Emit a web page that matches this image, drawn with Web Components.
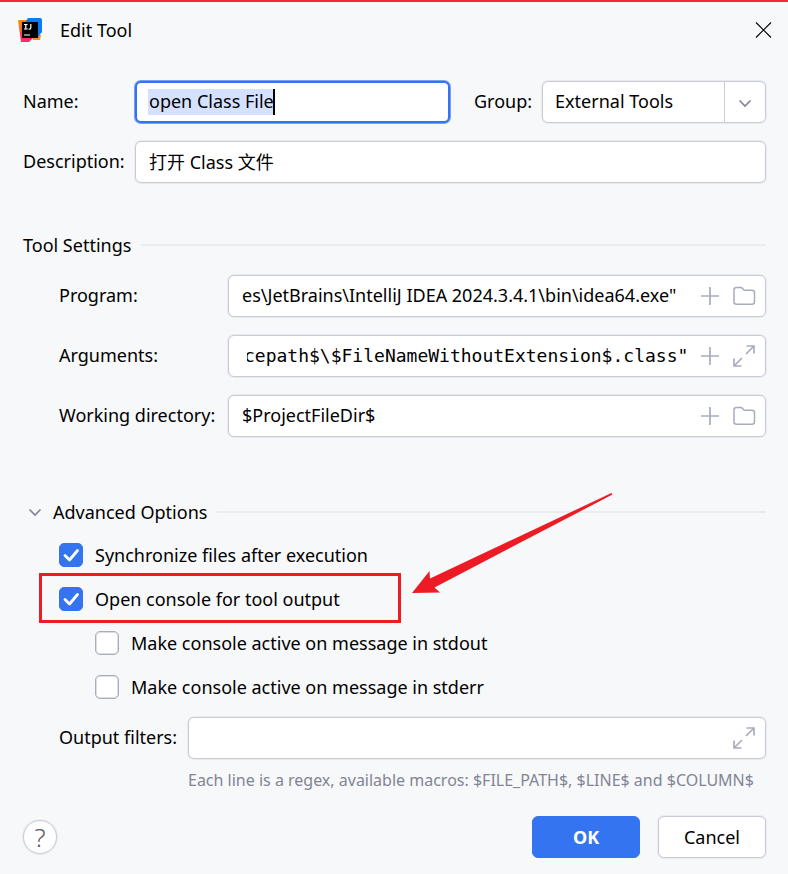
<!DOCTYPE html>
<html lang="en">
<head>
<meta charset="utf-8">
<title>Edit Tool</title>
<style>
  html { height: 100%; }
  body {
    margin: 0; min-height: 100%; box-sizing: border-box;
    background: #f7f8fa; color: #000; border-top: 2px solid #ec2a38;
    font: 18px/24px "Noto Sans", "Noto Sans CJK SC", sans-serif;
    --line: #c9ccd6; --accent: #3574f0; --icon: #a8adbd;
  }
</style>
</head>
<body>
<edit-tool-dialog></edit-tool-dialog>
<script>
const base = `
  *, *::before, *::after { box-sizing: border-box; }
  button, input, select { font: inherit; color: inherit; margin: 0; }
  svg { display: block; fill: none; }
  button { cursor: pointer; }
`;
function define(name, render, after) {
  customElements.define(name, class extends HTMLElement {
    connectedCallback() {
      if (this.shadowRoot) return;
      const root = this.attachShadow({ mode: 'open' });
      root.innerHTML = render(this);
      if (after) after(this, root);
    }
  });
}

const icons = {
  plus: '<path d="M12 3v18M3 12h18" stroke-width="1.700"/>',
  folder: '<path d="M2 6q0-2.500 2.500-2.500h4.200q.8 0 1.400.6l2.200 2.200h7.700q2.500 0 2.500 2.500v9q0 2.500-2.500 2.500h-15.500q-2.500 0-2.500-2.500z" stroke-width="1.500"/>',
  expand: '<path d="M14 10l8-8M14.500 2H22v7.500M10 14l-8 8M2 14.500V22h7.500" stroke-width="1.700"/>',
  chevron: '<path d="M6.500 9.500l5.500 5.500 5.500-5.500" stroke-width="1.700"/>',
  close: '<path d="M4 4.500l15 15M19 4.500L4 19.500" stroke-width="1.100"/>'
};
define('ui-icon', el => `<style>${base}
  :host { display: block; width: 24px; height: 24px; flex: none; }
  svg { width: 100%; height: 100%; stroke: currentColor; }
</style><svg viewBox="0 0 24 24" aria-hidden="true">${icons[el.getAttribute('name')]}</svg>`);

define('app-logo', () => `<style>${base}
  :host { display: block; width: 24px; height: 24px; flex: none; }
</style>
<svg width="24" height="24" viewBox="0 0 24 24" aria-hidden="true">
  <defs>
    <linearGradient id="a" x1="0" y1="0" x2=".3" y2="1"><stop offset="0" stop-color="#ff8a19"/><stop offset=".4" stop-color="#ff6a2a"/><stop offset=".65" stop-color="#ff3a50"/><stop offset="1" stop-color="#ff2a6b"/></linearGradient>
  </defs>
  <path d="M14 17h9l-1 5h-7z" fill="#ff8a1f"/>
  <path d="M0 2h9v14l6 4-4 4H3z" fill="url(#a)"/>
  <path d="M10 0h12q2 0 2 2v12l-4 5-12-12V3z" fill="#087cfa"/>
  <path d="M4 4h16v16H4z" fill="#000"/>
  <path d="M6 6.500h3.600M7.800 6.500v4.500M6 11h3.600M12.800 6v4q0 1.200-1.200 1.200H10.600M6 17h6" stroke="#fff" stroke-width="1.200"/>
</svg>`);

define('dialog-header', () => `<style>${base}
  :host { display: flex; align-items: center; gap: 18px; height: 56px; padding: 0 12px 0 18px; }
  h1 { flex: 1; margin: 0; font: inherit; }
  button { border: 0; background: none; padding: 0; width: 24px; height: 24px; }
</style>
<app-logo></app-logo><h1><slot></slot></h1>
<button type="button" aria-label="Close"><ui-icon name="close"></ui-icon></button>`);

/* A labelled text box; trailing icon buttons come from the "actions" attribute. */
define('text-field', el => {
  const acts = (el.getAttribute('actions') || '').split(' ').filter(Boolean);
  return `<style>${base}
  :host { display: flex; align-items: center; min-width: 0; }
  label { flex: 0 0 var(--label-width); white-space: nowrap; padding-bottom: 2px; }
  .box { flex: 1; min-width: 0; height: 42px; display: flex; align-items: center; gap: 10px;
    padding: 0 9px 0 12px; background: #fff; border: 1px solid var(--line); border-radius: 6px;
    box-shadow: 0 0 0 1px #c9ccd64d; }
  :host([focused]) .box { border: 2px solid var(--accent); box-shadow: 0 0 0 1px #3574f0aa; padding-left: 11px; }
  input { flex: 1; min-width: 0; width: 0; height: 26px; border: 0; padding: 0 0 2px 1px; background: none; outline: 0; }
  :host([mono]) input { font-family: "DejaVu Sans Mono", monospace; padding-left: 6px; }
  :host([focused]) input {
    background: linear-gradient(#000, #000) var(--caret) 0 / 2px 100% no-repeat,
      linear-gradient(#d4e2ff, #d4e2ff) 0 0 / var(--caret) 100% no-repeat; }
  button { border: 0; background: none; padding: 0; color: var(--icon); }
</style>
<label for="f">${el.getAttribute('label')}</label>
<div class="box"><input id="f" type="text">${acts.map(a => `<button type="button" aria-label="${a}"><ui-icon name="${a}"></ui-icon></button>`).join('')}</div>`;
}, (el, root) => {
  const input = root.querySelector('input');
  input.value = el.getAttribute('value') || '';
  if (el.hasAttribute('focused')) {
    const c = document.createElement('canvas').getContext('2d');
    c.font = getComputedStyle(input).font;
    el.style.setProperty('--caret', Math.ceil(c.measureText(input.value).width) + 'px');
  }
  if (el.hasAttribute('mono')) input.scrollLeft = input.scrollWidth;
});

define('select-field', el => `<style>${base}
  :host { display: flex; align-items: center; gap: 10px; }
  label { padding-bottom: 2px; }
  .box { flex: 1; display: grid; grid-template-columns: 1fr 41px; height: 42px; background: #fff;
    border: 1px solid var(--line); border-radius: 6px; box-shadow: 0 0 0 1px #c9ccd64d; }
  select { grid-area: 1 / 1 / 2 / 3; appearance: none; border: 0; background: none; padding: 0 54px 2px 12px; width: 100%; outline: 0; }
  .arrow { grid-area: 1 / 2; border-left: 1px solid var(--line); display: grid; place-items: center; color: #818594; pointer-events: none; padding-top: 2px; }
</style>
<label for="s">${el.getAttribute('label')}</label>
<div class="box"><select id="s"><option>${el.getAttribute('value')}</option></select>
<div class="arrow"><ui-icon name="chevron"></ui-icon></div></div>`);

define('section-title', el => `<style>${base}
  :host { display: flex; align-items: center; gap: 10px; }
  h2 { margin: 0; font: inherit; }
  button { display: flex; align-items: center; gap: 6px; border: 0; background: none; padding: 0; }
  ui-icon { color: #818594; }
  hr { flex: 1; border: 0; height: 2px; margin: 0; background: #ebecf0; }
</style>
<h2>${el.hasAttribute('collapsible')
  ? '<button type="button" aria-expanded="true"><ui-icon name="chevron"></ui-icon><slot></slot></button>'
  : '<slot></slot>'}</h2><hr>`);

define('check-option', el => `<style>${base}
  :host { display: flex; align-items: center; gap: 12px; height: 24px; position: relative; }
  :host([nested]) { margin-left: 36px; }
  .tick { display: grid; width: 24px; height: 24px; }
  .tick > * { grid-area: 1 / 1; }
  input { appearance: none; width: 24px; height: 24px; border: 1px solid #a8adbd; box-shadow: inset 0 0 0 1px #a8adbd66; border-radius: 5px; background: #fff; }
  input:checked { background: var(--accent); border-color: var(--accent); box-shadow: none; }
  svg { pointer-events: none; visibility: hidden; }
  input:checked + svg { visibility: visible; }
</style>
<span class="tick"><input id="c" type="checkbox" ${el.hasAttribute('checked') ? 'checked' : ''}>
<svg width="24" height="24" viewBox="0 0 24 24"><path d="M6 12.500l4.500 4.500L18.500 7.500" stroke="#fff" stroke-width="2.800" stroke-linecap="round" stroke-linejoin="round"/></svg></span>
<label for="c">${el.getAttribute('label')}</label><slot></slot>`);

/* Red frame and arrow drawn over the option that holds it. */
define('callout-mark', () => `<style>${base}
  :host { position: absolute; left: -20px; top: -14px; width: 362px; height: 50px; border: 3px solid #ed1c24; pointer-events: none; }
  svg { position: absolute; left: 370px; bottom: 26px; }
</style>
<svg width="202" height="101" viewBox="0 0 202 101" aria-hidden="true"><path fill="#ed1c24" d="M0 100l17.500-22 .5 7.500L199.500 0l1 1.500L22.500 94.500l5.500 5z"/></svg>`);

define('push-button', () => `<style>${base}
  :host { display: block; }
  button { width: 108px; height: 42px; border: 1px solid var(--line); border-radius: 6px; background: #fff; padding: 0; box-shadow: 0 0 0 1px #c9ccd64d; }
  :host([primary]) button { background: var(--accent); border-color: var(--accent); color: #fff; font-weight: 700; box-shadow: none; }
  :host([round]) button { width: 34px; height: 34px; border-radius: 50%; font-size: 26px; line-height: 28px; font-weight: 300; color: #5a5d6b; }
</style><button type="button"><slot></slot></button>`);

define('edit-tool-dialog', () => `<style>${base}
  :host { display: block; }
  main { padding: 23px 22px 0 23px; }
  .top { display: grid; gap: 18px; --label-width: 112px; }
  .row { display: grid; gap: 24px; grid-template-columns: minmax(0, 427fr) minmax(0, 292fr); }
  .tools { display: grid; gap: 18px; padding-left: 36px; margin-top: 18px; --label-width: 169px; }
  .tools-title { margin-top: 50px; }
  .advanced { margin-top: 63px; }
  .options { display: grid; gap: 20px; padding-left: 36px; margin-top: 19px; }
  .filters { margin: 18px 0 0 36px; --label-width: 129px; }
  .hint { margin: 9px 0 0 165px; font-size: 16px; color: #818594; white-space: nowrap; }
  footer { display: flex; align-items: center; gap: 18px; margin-top: 24px; padding-bottom: 16px; }
  footer push-button[round] { margin-right: auto; }
</style>
<dialog-header>Edit Tool</dialog-header>
<main>
  <div class="top">
    <div class="row">
      <text-field focused label="Name:" value="open Class File"></text-field>
      <select-field label="Group:" value="External Tools"></select-field>
    </div>
    <text-field label="Description:" value="打开 Class 文件"></text-field>
  </div>
  <section-title class="tools-title">Tool Settings</section-title>
  <div class="tools">
    <text-field label="Program:" actions="plus folder" value='es\\JetBrains\\IntelliJ IDEA 2024.3.4.1\\bin\\idea64.exe"'></text-field>
    <text-field mono label="Arguments:" actions="plus expand" value='cepath$\\$FileNameWithoutExtension$.class"'></text-field>
    <text-field label="Working directory:" actions="plus folder" value="$ProjectFileDir$"></text-field>
  </div>
  <section-title class="advanced" collapsible>Advanced Options</section-title>
  <div class="options">
    <check-option checked label="Synchronize files after execution"></check-option>
    <check-option checked label="Open console for tool output"><callout-mark></callout-mark></check-option>
    <check-option nested label="Make console active on message in stdout"></check-option>
    <check-option nested label="Make console active on message in stderr"></check-option>
  </div>
  <text-field class="filters" label="Output filters:" actions="expand"></text-field>
  <p class="hint">Each line is a regex, available macros: $FILE_PATH$, $LINE$ and $COLUMN$</p>
  <footer>
    <push-button round>?</push-button>
    <push-button primary>OK</push-button>
    <push-button>Cancel</push-button>
  </footer>
</main>`);
</script>
</body>
</html>
